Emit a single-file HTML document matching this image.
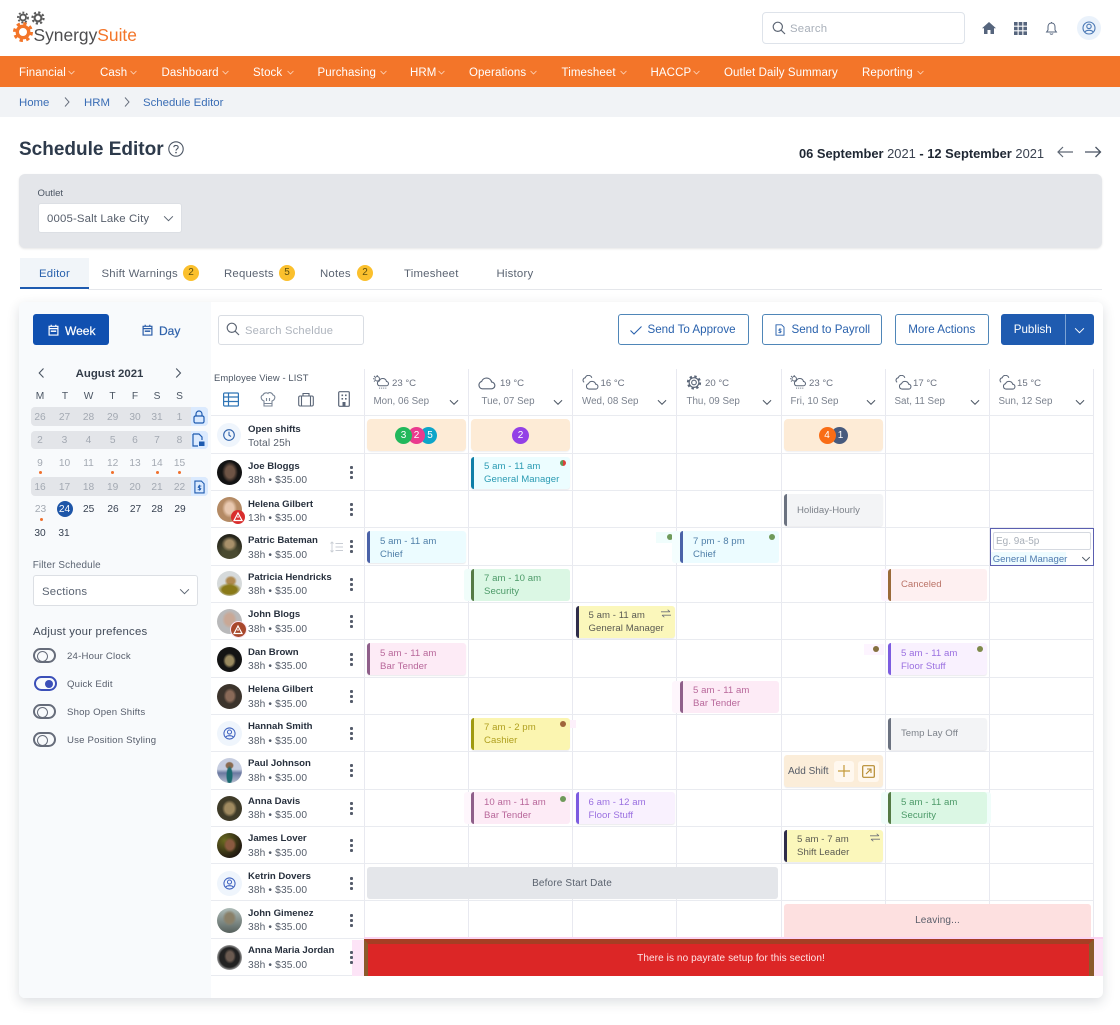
<!DOCTYPE html>
<html lang="en"><head><meta charset="utf-8"><title>Schedule Editor</title>
<style>
*{box-sizing:border-box}
html,body{margin:0;padding:0;background:#fff}
body{width:1120px;height:1025px;position:relative;overflow:hidden;font-family:"Liberation Sans",sans-serif;color:#374151;filter:blur(.3px)}
.a{position:absolute}
.t{position:absolute;white-space:nowrap;line-height:14px;transform:translateY(calc(-50% + .8px))}
.m{position:absolute;white-space:nowrap;line-height:14px;transform:translate(-50%,calc(-50% + .8px))}
svg{position:absolute;overflow:visible;fill:none}
.nav{color:#fff;font-size:11.5px;letter-spacing:.1px;top:71.5px}
.navc{top:69.5px;stroke:#fde3d0;stroke-width:1}
.tab{font-size:11.4px;color:#5b6472;top:273px;letter-spacing:.2px}
.bd{position:absolute;width:16px;height:16px;border-radius:50%;background:#fbc02d;top:265px;font-size:10px;line-height:16px;text-align:center;color:#5f500e}
.btn{position:absolute;top:314px;height:31px;border:1px solid #4f86b8;border-radius:3px;background:#fff;color:#2a62ad;font-size:11.6px;line-height:30px;white-space:nowrap}
.cal{font-size:10.2px;color:#a3a9b2}
.cd{font-size:10.2px;color:#374151}
.bar{position:absolute;left:31px;width:177px;height:18.7px;background:#e3e5e9;border-radius:4px}
.bl{position:absolute;left:191px;width:17px;height:18.7px;background:#dbeafe;border-radius:0 4px 4px 0}
.dot{position:absolute;width:3px;height:3px;border-radius:50%;background:#f0702c}
.tg{position:absolute;left:33px;width:23px;height:15px;border:2px solid #666c7a;border-radius:8px}
.tg:after{content:"";position:absolute;left:2px;top:1px;width:9px;height:9px;border:1.6px solid #666c7a;border-radius:50%}
.tl{font-size:9.6px;color:#565d6b;left:67px;letter-spacing:.2px}
.vl{position:absolute;top:369px;height:569px;width:1px;background:#e8e9f0}
.hl{position:absolute;left:211px;width:883px;height:1px;background:#e9ebf0}
.wt{font-size:9.6px;color:#6b7280;top:382.7px}
.wd{font-size:9.8px;color:#7b828e;top:400.5px}
.n{font-size:9.6px;font-weight:bold;color:#27303d;left:248px}
.s{font-size:10.2px;color:#565e6b;left:248px;letter-spacing:.15px}
.av{position:absolute;left:217px;width:25px;height:25px;border-radius:50%}
.k{position:absolute;left:350px;width:3px;height:13px;background:radial-gradient(circle at 1.5px 1.5px,#555c6b 1.5px,transparent 1.7px) 0 0/3px 5px repeat-y}
.c{position:absolute;width:99px;height:32px;border-radius:3px;border-left:3px solid;padding:3.5px 0 0 10px;font-size:9.6px;line-height:13px;white-space:nowrap;box-shadow:0 1px 1px rgba(60,60,80,.1)}
.c span{display:block;letter-spacing:.05px}
.gm{background:#ecfdff;border-color:#0e7fa8;color:#2b9bb3}
.ch{background:#ecfcff;border-color:#4a62a8;color:#4f7fa8}
.gr{background:#dbf7e4;border-color:#557a45;color:#4c9a68}
.ye{background:#fbf7bb;border-color:#2f2d4a;color:#5a5a52}
.ca{background:#fbf5b0;border-color:#a09a10;color:#b0a020}
.pk{background:#fdebf6;border-color:#8f5f8a;color:#b8679a}
.pu{background:#f9f1fe;border-color:#7c5ce0;color:#9a6fe0}
.gy{background:#f3f4f6;border-color:#6b7280;color:#7d828a;line-height:26px}
.cn{background:#fef0f1;border-color:#9a6a3a;color:#bb7468;line-height:26px}
.o{position:absolute;height:32px;width:99px;background:#fdebd6;border-radius:4px;box-shadow:0 1px 1px rgba(60,60,80,.08)}
.r{position:absolute;width:17px;height:17px;border-radius:50%;color:#fff;font-size:10px;line-height:17px;text-align:center;top:427px}
.d{position:absolute;width:6px;height:6px;border-radius:50%}
</style></head><body>
<svg width="0" height="0" style="position:absolute"><defs>
<symbol id="chev" viewBox="0 0 12 8"><path d="M1 1.5 6 6.5 11 1.5" stroke="currentColor" stroke-width="1.2" fill="none"/></symbol>
<symbol id="cl" viewBox="0 0 18 16"><path d="M5 14H13.5a3.2 3.2 0 0 0 .4-6.4A5 5 0 0 0 4.4 7 3.6 3.6 0 0 0 5 14Z" stroke="#5a6577" stroke-width="1.1" fill="none"/></symbol>
<symbol id="cls" viewBox="0 0 18 16"><path d="M2.2 7.8A2.7 2.7 0 0 1 3.4 2.9 3.7 3.7 0 0 1 10.4 3M7.4 15H14.2a2.6 2.6 0 0 0 .3-5.2 4 4 0 0 0-7.6-.5A2.9 2.9 0 0 0 7.4 15Z" stroke="#5a6577" stroke-width="1.1" fill="none"/></symbol>
<symbol id="rain" viewBox="0 0 18 16"><circle cx="4.4" cy="4" r="2.4" stroke="#5a6577" fill="none"/><path d="M1 1 2 2M4.4 0V1M1 4H0M1 7 2 6" stroke="#5a6577"/><path d="M7 11.5H14a2.3 2.3 0 0 0 .3-4.6A4 4 0 0 0 6.6 6.4 2.6 2.6 0 0 0 7 11.5Z" stroke="#5a6577" stroke-width="1.1" fill="#fff"/><path d="M6.5 14h8" stroke="#5a6577" stroke-dasharray="1 1.2"/></symbol>
<symbol id="gear" viewBox="0 0 16 16"><circle cx="8" cy="8" r="2.5" stroke="#5a6577" stroke-width="1.2" fill="none"/><circle cx="8" cy="8" r="5.2" stroke="#5a6577" stroke-width="1.2" fill="none"/><circle cx="8" cy="8" r="6.6" stroke="#5a6577" stroke-width="2" stroke-dasharray="2.6 2.6" fill="none"/></symbol>
<symbol id="sw" viewBox="0 0 12 10"><path d="M0 3H10.5M8 .5 10.8 3M12 7H1.5M4 9.5 1.2 7" stroke="#6d7078" stroke-width="1" fill="none"/></symbol>
<symbol id="tri" viewBox="0 0 14 14"><path d="M7 3 11 10.5H3Z" stroke="#fff" stroke-width="1.2" fill="none"/><path d="M7 6V8" stroke="#fff"/></symbol>
<symbol id="user" viewBox="0 0 14 14"><circle cx="7" cy="7" r="6" stroke="currentColor" stroke-width="1.1" fill="none"/><circle cx="7" cy="5.4" r="2.2" stroke="currentColor" stroke-width="1.1" fill="none"/><path d="M3 11c1-2.2 7-2.2 8 0" stroke="currentColor" stroke-width="1.1" fill="none"/></symbol>
<symbol id="cal" viewBox="0 0 12 13"><path d="M1.2 2.5H10.8V12H1.2ZM1.2 5H10.8M3.5 .8V3M8.5 .8V3" stroke="currentColor" stroke-width="1.3" fill="none"/><path d="M3 7.8H9" stroke="currentColor" stroke-width="1.6"/></symbol>
<symbol id="doc" viewBox="0 0 12 15"><path d="M1 1H8L11 4V14H1Z" stroke="currentColor" stroke-width="1.2" fill="none"/><path d="M6 5V11.5M8 6.5H5L4.5 8 7.5 9 7 10.5H4" stroke="currentColor" stroke-width=".9" fill="none"/></symbol>
</defs></svg>

<!-- logo -->
<svg style="left:13px;top:22px" width="20" height="20" viewBox="0 0 20 20"><circle cx="10" cy="10" r="5.7" stroke="#f37529" stroke-width="3.4"/><circle cx="10" cy="10" r="8.4" stroke="#f37529" stroke-width="3.2" stroke-dasharray="3.3 3.3"/></svg>
<svg style="left:17px;top:12px" width="12" height="11" viewBox="0 0 12 11"><circle cx="6" cy="5.5" r="3" stroke="#5a5a5a" stroke-width="1.9"/><circle cx="6" cy="5.5" r="5" stroke="#5a5a5a" stroke-width="1.8" stroke-dasharray="1.9 1.9"/></svg>
<svg style="left:31px;top:12px" width="16" height="12" viewBox="0 0 16 12"><circle cx="7" cy="6" r="3.4" stroke="#5a5a5a" stroke-width="2.1"/><circle cx="7" cy="6" r="5.6" stroke="#5a5a5a" stroke-width="2.1" stroke-dasharray="2.2 2.2"/></svg>
<div class="t" style="left:33.5px;top:33.5px;font-size:17.4px;line-height:20px;color:#4d4d4f">Synergy<span style="color:#f37529">Suite</span></div>

<!-- top right -->
<div class="a" style="left:762px;top:12px;width:203px;height:31.5px;border:1.5px solid #dee3ea;border-radius:4px;background:#fff"></div>
<svg style="left:772px;top:21px" width="14" height="14" viewBox="0 0 14 14"><circle cx="5.8" cy="5.8" r="4.6" stroke="#5d6674" stroke-width="1.2"/><path d="M9.2 9.2 13 13" stroke="#5d6674" stroke-width="1.2"/></svg>
<div class="t" style="left:790px;top:28px;font-size:11.4px;color:#a8afb9;letter-spacing:.2px">Search</div>
<svg style="left:982px;top:22px" width="14" height="12" viewBox="0 0 14 12"><path d="M7 0 14 6.2H12V12H8.5V8H5.5V12H2V6.2H0Z" fill="#56657d"/></svg>
<svg style="left:1014px;top:22px" width="13" height="13" viewBox="0 0 13 13" fill="#56657d"><path fill="#56657d" d="M0 0h3.6v3.6H0zM4.7 0h3.6v3.6H4.7zM9.4 0H13v3.6H9.4zM0 4.7h3.6v3.6H0zM4.7 4.7h3.6v3.6H4.7zM9.4 4.7H13v3.6H9.4zM0 9.4h3.6V13H0zM4.7 9.4h3.6V13H4.7zM9.4 9.4H13V13H9.4z"/></svg>
<svg style="left:1046px;top:22px" width="11" height="13" viewBox="0 0 11 13"><path d="M5.5 1C3 1 2 3 2 5V8L.6 10H10.4L9 8V5C9 3 8 1 5.5 1ZM4 11.4C4.5 12.6 6.5 12.6 7 11.4M5.5 0V1" stroke="#56657d" stroke-width="1"/></svg>
<div class="a" style="left:1077px;top:16px;width:24px;height:24px;border-radius:50%;background:#eaf2fb"></div>
<svg style="left:1082px;top:21px;color:#4a78b5" width="14" height="14"><use href="#user"/></svg>

<!-- nav -->
<div class="a" style="left:0;top:56px;width:1120px;height:31px;background:#f37529"></div>
<div class="t nav" style="left:19px">Financial</div><svg class="navc" style="left:67.5px;color:#fde3d0" width="7" height="5"><use href="#chev"/></svg>
<div class="t nav" style="left:100px">Cash</div><svg class="navc" style="left:129.5px;color:#fde3d0" width="7" height="5"><use href="#chev"/></svg>
<div class="t nav" style="left:161.5px">Dashboard</div><svg class="navc" style="left:221.5px;color:#fde3d0" width="7" height="5"><use href="#chev"/></svg>
<div class="t nav" style="left:253px">Stock</div><svg class="navc" style="left:286.5px;color:#fde3d0" width="7" height="5"><use href="#chev"/></svg>
<div class="t nav" style="left:317.5px">Purchasing</div><svg class="navc" style="left:379.5px;color:#fde3d0" width="7" height="5"><use href="#chev"/></svg>
<div class="t nav" style="left:410px">HRM</div><svg class="navc" style="left:438px;color:#fde3d0" width="7" height="5"><use href="#chev"/></svg>
<div class="t nav" style="left:469px">Operations</div><svg class="navc" style="left:530px;color:#fde3d0" width="7" height="5"><use href="#chev"/></svg>
<div class="t nav" style="left:561.5px">Timesheet</div><svg class="navc" style="left:619.5px;color:#fde3d0" width="7" height="5"><use href="#chev"/></svg>
<div class="t nav" style="left:650.5px">HACCP</div><svg class="navc" style="left:692.5px;color:#fde3d0" width="7" height="5"><use href="#chev"/></svg>
<div class="t nav" style="left:724px">Outlet Daily Summary</div>
<div class="t nav" style="left:862px">Reporting</div><svg class="navc" style="left:916.5px;color:#fde3d0" width="7" height="5"><use href="#chev"/></svg>

<!-- breadcrumb -->
<div class="a" style="left:0;top:87px;width:1120px;height:30px;background:#f1f3f6"></div>
<div class="t" style="left:19px;top:102px;font-size:11.4px;color:#3a6db5">Home</div>
<svg style="left:64px;top:97px" width="6" height="10"><path d="M1 .5 5 5 1 9.5" stroke="#6b7280"/></svg>
<div class="t" style="left:84px;top:102px;font-size:11.4px;color:#3a6db5">HRM</div>
<svg style="left:124px;top:97px" width="6" height="10"><path d="M1 .5 5 5 1 9.5" stroke="#6b7280"/></svg>
<div class="t" style="left:143px;top:102px;font-size:11.4px;color:#3a6db5">Schedule Editor</div>

<!-- title -->
<div class="t" style="left:19px;top:149px;font-size:19px;line-height:22px;font-weight:bold;color:#2d3a4b">Schedule Editor</div>
<svg style="left:168px;top:141px" width="16" height="16" viewBox="0 0 16 16"><circle cx="8" cy="8" r="7.2" stroke="#4b5563" stroke-width="1.1"/><path d="M5.8 6.2C6 3.9 10.2 3.9 10.2 6.3 10.2 7.9 8 7.9 8 9.6" stroke="#4b5563" stroke-width="1.1"/><circle cx="8" cy="11.6" r=".8" fill="#4b5563"/></svg>
<div class="t" style="left:799px;top:152.5px;font-size:12.9px;color:#3a4250"><b style="color:#1f2733">06 September</b> 2021 <b style="color:#1f2733">- 12 September</b> 2021</div>
<svg style="left:1057px;top:146px" width="17" height="12"><path d="M16 6H1M6 1 1 6 6 11" stroke="#5f6875" stroke-width="1.2"/></svg>
<svg style="left:1085px;top:146px" width="17" height="12"><path d="M0 6H15.5M10.5 1 15.5 6 10.5 11" stroke="#4b5563" stroke-width="1.3"/></svg>

<!-- outlet panel -->
<div class="a" style="left:19px;top:173.5px;width:1083px;height:74px;background:#e4e6ea;border-radius:6px;box-shadow:0 1px 2px rgba(0,0,0,.1)"></div>
<div class="t" style="left:37.5px;top:192.5px;font-size:9.6px;color:#4b5563">Outlet</div>
<div class="a" style="left:37.5px;top:203px;width:144px;height:30px;background:#fff;border:1px solid #dcdfe4;border-radius:3px"></div>
<div class="t" style="left:47px;top:217.5px;font-size:11.4px;color:#565e6b;letter-spacing:.15px">0005-Salt Lake City</div>
<svg style="left:163px;top:215px;color:#5b6472" width="11" height="7"><use href="#chev"/></svg>

<!-- tabs -->
<div class="a" style="left:20px;top:258px;width:68.5px;height:31px;background:#f1f5f9;border-bottom:2px solid #1e5bb0"></div>
<div class="a" style="left:88px;top:289px;width:1014px;height:1px;background:#e5e7eb"></div>
<div class="t tab" style="left:39px;color:#2a62ad">Editor</div>
<div class="t tab" style="left:101.5px">Shift Warnings</div><div class="bd" style="left:183px">2</div>
<div class="t tab" style="left:224px">Requests</div><div class="bd" style="left:279px">5</div>
<div class="t tab" style="left:320px">Notes</div><div class="bd" style="left:357px">2</div>
<div class="t tab" style="left:404px">Timesheet</div>
<div class="t tab" style="left:496.5px">History</div>

<!-- main card -->
<div class="a" style="left:19px;top:302px;width:1084px;height:696px;background:#fff;border-radius:6px;box-shadow:0 4px 12px rgba(40,50,70,.16)"></div>
<div class="a" style="left:19px;top:302px;width:192px;height:696px;background:#f8fafc;border-radius:6px 0 0 6px"></div>

<!-- week/day -->
<div class="a" style="left:32.6px;top:314px;width:76px;height:31px;background:#1050b0;border-radius:3px"></div>
<svg style="left:47.5px;top:324px;color:#fff" width="11" height="12"><use href="#cal"/></svg>
<div class="t" style="left:65px;top:330px;font-size:12px;color:#fff;-webkit-text-stroke:.2px #fff">Week</div>
<svg style="left:141.5px;top:324px;color:#2a5ca8" width="11" height="12"><use href="#cal"/></svg>
<div class="t" style="left:159px;top:330px;font-size:12px;color:#2f62ab;-webkit-text-stroke:.2px #2f62ab">Day</div>

<!-- calendar -->
<svg style="left:38px;top:368px" width="7" height="10"><path d="M5.5 .5 1.2 5 5.5 9.5" stroke="#4b5563" stroke-width="1.1"/></svg>
<svg style="left:175px;top:368px" width="7" height="10"><path d="M1.2 .5 5.5 5 1.2 9.5" stroke="#4b5563" stroke-width="1.1"/></svg>
<div class="m" style="left:109.5px;top:373px;font-size:11.4px;font-weight:bold;color:#333c49">August 2021</div>
<div class="m cd" style="left:40px;top:395.7px;color:#4b5563">M</div><div class="m cd" style="left:65px;top:395.7px;color:#4b5563">T</div><div class="m cd" style="left:88.5px;top:395.7px;color:#4b5563">W</div><div class="m cd" style="left:112.5px;top:395.7px;color:#4b5563">T</div><div class="m cd" style="left:135px;top:395.7px;color:#4b5563">F</div><div class="m cd" style="left:157px;top:395.7px;color:#4b5563">S</div><div class="m cd" style="left:179.5px;top:395.7px;color:#4b5563">S</div>

<div class="bar" style="top:407.3px"></div><div class="bl" style="top:407.3px"></div>
<div class="bar" style="top:430.7px"></div><div class="bl" style="top:430.7px"></div>
<div class="bar" style="top:477.3px"></div><div class="bl" style="top:477.3px"></div>
<svg style="left:193px;top:410px" width="12" height="14" viewBox="0 0 12 14"><rect x="1" y="6" width="10" height="7" rx="1.5" stroke="#1e5bb0" stroke-width="1.2"/><path d="M3 6V4a3 3 0 0 1 6 0V6" stroke="#1e5bb0" stroke-width="1.2"/></svg>
<svg style="left:192px;top:433px;color:#1e5bb0" width="13" height="14" viewBox="0 0 13 14"><path d="M1 1H7L10 4V7M6 13H1V1" stroke="#1e5bb0" stroke-width="1.2"/><rect x="7" y="8.5" width="5.5" height="4.5" fill="#1e5bb0"/></svg>
<svg style="left:194px;top:479.5px;color:#1e5bb0" width="11" height="14"><use href="#doc"/></svg>

<div class="m cal" style="left:40px;top:416.7px">26</div><div class="m cal" style="left:64.5px;top:416.7px">27</div><div class="m cal" style="left:88.5px;top:416.7px">28</div><div class="m cal" style="left:112.7px;top:416.7px">29</div><div class="m cal" style="left:135px;top:416.7px">30</div><div class="m cal" style="left:157px;top:416.7px">31</div><div class="m cal" style="left:179.5px;top:416.7px">1</div>
<div class="m cal" style="left:40px;top:439.7px">2</div><div class="m cal" style="left:64.5px;top:439.7px">3</div><div class="m cal" style="left:88.5px;top:439.7px">4</div><div class="m cal" style="left:112.7px;top:439.7px">5</div><div class="m cal" style="left:135px;top:439.7px">6</div><div class="m cal" style="left:157px;top:439.7px">7</div><div class="m cal" style="left:179.5px;top:439.7px">8</div>
<div class="m cal" style="left:40px;top:462.7px">9</div><div class="m cal" style="left:64.5px;top:462.7px">10</div><div class="m cal" style="left:88.5px;top:462.7px">11</div><div class="m cal" style="left:112.7px;top:462.7px">12</div><div class="m cal" style="left:135px;top:462.7px">13</div><div class="m cal" style="left:157px;top:462.7px">14</div><div class="m cal" style="left:179.5px;top:462.7px">15</div>
<div class="dot" style="left:38.7px;top:471px"></div><div class="dot" style="left:111.3px;top:471px"></div><div class="dot" style="left:155.6px;top:471px"></div><div class="dot" style="left:178px;top:471px"></div>
<div class="m cal" style="left:40px;top:486.7px">16</div><div class="m cal" style="left:64.5px;top:486.7px">17</div><div class="m cal" style="left:88.5px;top:486.7px">18</div><div class="m cal" style="left:112.7px;top:486.7px">19</div><div class="m cal" style="left:135px;top:486.7px">20</div><div class="m cal" style="left:157px;top:486.7px">21</div><div class="m cal" style="left:179.5px;top:486.7px">22</div>
<div class="m cal" style="left:40.5px;top:509.3px">23</div><div class="dot" style="left:39.5px;top:517.5px"></div>
<div class="a" style="left:56.5px;top:501px;width:16px;height:16px;border-radius:50%;background:#1e56a8"></div>
<div class="m" style="left:64.5px;top:509.3px;font-size:10.2px;color:#fff">24</div>
<div class="m cd" style="left:88.7px;top:509.3px">25</div><div class="m cd" style="left:113px;top:509.3px">26</div><div class="m cd" style="left:135.5px;top:509.3px">27</div><div class="m cd" style="left:157px;top:509.3px">28</div><div class="m cd" style="left:180px;top:509.3px">29</div>
<div class="m cd" style="left:40px;top:533px">30</div><div class="m cd" style="left:64px;top:533px">31</div>

<!-- filter -->
<div class="t" style="left:32.7px;top:565px;font-size:9.9px;color:#5b6472;letter-spacing:.15px">Filter Schedule</div>
<div class="a" style="left:32.7px;top:575px;width:165.5px;height:30.5px;background:#fff;border:1px solid #dcdfe4;border-radius:3px"></div>
<div class="t" style="left:42px;top:590.5px;font-size:11.4px;color:#5b6472;letter-spacing:.2px">Sections</div>
<svg style="left:179px;top:587.5px;color:#5b6472" width="11" height="7"><use href="#chev"/></svg>
<div class="t" style="left:33px;top:631px;font-size:11.4px;color:#424b59;letter-spacing:.2px">Adjust your prefences</div>
<div class="tg" style="top:648px"></div><div class="t tl" style="top:656px">24-Hour Clock</div>
<div class="a" style="left:33.5px;top:676px;width:23px;height:15px;border:2px solid #3b4fb8;border-radius:8px"></div><div class="a" style="left:45px;top:679.5px;width:8px;height:8px;border-radius:50%;background:#3b4fb8"></div><div class="t tl" style="top:684px">Quick Edit</div>
<div class="tg" style="top:704px"></div><div class="t tl" style="top:712px">Shop Open Shifts</div>
<div class="tg" style="top:732px"></div><div class="t tl" style="top:740px">Use Position Styling</div>

<!-- search schedule -->
<div class="a" style="left:217.5px;top:314.5px;width:146px;height:30.5px;background:#fff;border:1px solid #d9dde3;border-radius:3px"></div>
<svg style="left:226px;top:322px" width="14" height="14" viewBox="0 0 14 14"><circle cx="5.8" cy="5.8" r="4.6" stroke="#5d6674" stroke-width="1.2"/><path d="M9.2 9.2 13 13" stroke="#5d6674" stroke-width="1.2"/></svg>
<div class="t" style="left:245px;top:330px;font-size:11.2px;color:#aeb4bd;letter-spacing:.2px">Search Scheldue</div>

<!-- buttons -->
<div class="btn" style="left:617.5px;width:131.5px;padding-left:29px">Send To Approve</div>
<svg style="left:630px;top:326px" width="12" height="9"><path d="M.5 4.5 4 8 11.5 .5" stroke="#2a62ad" stroke-width="1.1"/></svg>
<div class="btn" style="left:761.5px;width:120.5px;padding-left:29px">Send to Payroll</div>
<svg style="left:775px;top:323.5px;color:#2a62ad" width="10" height="12"><use href="#doc"/></svg>
<div class="btn" style="left:894.5px;width:94.5px;text-align:center">More Actions</div>
<div class="btn" style="left:1001px;width:63.5px;background:#1f5bb0;border-color:#1f5bb0;border-radius:3px 0 0 3px;color:#fff;text-align:center">Publish</div>
<div class="btn" style="left:1064.5px;width:29.5px;background:#1f5bb0;border-color:#1f5bb0;border-left:1px solid #7da3d4;border-radius:0 3px 3px 0"></div>
<svg style="left:1073.5px;top:327px;color:#fff" width="11" height="7"><use href="#chev"/></svg>

<!-- grid -->
<div class="vl" style="left:364px"></div><div class="vl" style="left:468px"></div><div class="vl" style="left:572px"></div><div class="vl" style="left:676px"></div><div class="vl" style="left:781px"></div><div class="vl" style="left:885px"></div><div class="vl" style="left:989px"></div><div class="vl" style="left:1093px"></div>
<div class="hl" style="top:415px"></div><div class="hl" style="top:453px"></div><div class="hl" style="top:490px"></div><div class="hl" style="top:527px"></div><div class="hl" style="top:565px"></div><div class="hl" style="top:602px"></div><div class="hl" style="top:639px"></div><div class="hl" style="top:677px"></div><div class="hl" style="top:714px"></div><div class="hl" style="top:751px"></div><div class="hl" style="top:789px"></div><div class="hl" style="top:826px"></div><div class="hl" style="top:863px"></div><div class="hl" style="top:900px"></div><div class="hl" style="top:938px"></div>
<div class="a" style="left:211px;top:975px;width:141px;height:1px;background:#e9ebf0"></div>

<!-- employee view header -->
<div class="t" style="left:214px;top:377px;font-size:9.4px;color:#4b5563;letter-spacing:.1px">Employee View - LIST</div>
<svg style="left:223px;top:391.5px" width="16" height="15" viewBox="0 0 16 15"><rect x=".6" y="1" width="14.8" height="13" rx="1" stroke="#2f74b5" stroke-width="1.2"/><path d="M.6 5H15.4M.6 9.5H15.4M5.5 1V14" stroke="#2f74b5" stroke-width="1.2"/></svg>
<svg style="left:260px;top:391.5px" width="16" height="15" viewBox="0 0 16 15"><path d="M4 9C1 8 0 4 3 3 4 .5 7 .5 8 1.5 9-.2 12 .5 13 3 16 4 15 8 12 9V14H4ZM4 11.5H12M6.5 6V9M9.5 6V9" stroke="#7a8696" stroke-width="1.1"/></svg>
<svg style="left:298px;top:391.5px" width="16" height="15" viewBox="0 0 16 15"><rect x=".7" y="4" width="14.6" height="10" rx="1.5" stroke="#5a6577" stroke-width="1.1"/><path d="M5 4V1.5H11V4M3.5 4V14M12.5 4V14" stroke="#5a6577" stroke-width="1.1"/></svg>
<svg style="left:338px;top:391px" width="12" height="16" viewBox="0 0 12 16"><rect x=".7" y=".7" width="10.6" height="14.6" rx="1" stroke="#5a6577" stroke-width="1.2"/><path d="M3.5 3.5h1.6v1.6H3.500zM7 3.500h1.600v1.600H7zM3.500 7h1.600v1.600H3.500zM7 7h1.600v1.600H7zM4.500 11h3v4.300h-3z" fill="#5a6577"/></svg>

<!-- day headers -->
<svg style="left:373px;top:375px" width="17" height="15"><use href="#rain"/></svg><div class="t wt" style="left:392px">23 °C</div><div class="t wd" style="left:373.5px">Mon, 06 Sep</div>
<svg style="left:477px;top:374px" width="19" height="17"><use href="#cl"/></svg><div class="t wt" style="left:500px">19 °C</div><div class="t wd" style="left:481.500px">Tue, 07 Sep</div>
<svg style="left:581.5px;top:375px" width="17" height="15"><use href="#cls"/></svg><div class="t wt" style="left:600.500px">16 °C</div><div class="t wd" style="left:582px">Wed, 08 Sep</div>
<svg style="left:686px;top:375px" width="16" height="15"><use href="#gear"/></svg><div class="t wt" style="left:705px">20 °C</div><div class="t wd" style="left:686.500px">Thu, 09 Sep</div>
<svg style="left:790px;top:375px" width="17" height="15"><use href="#rain"/></svg><div class="t wt" style="left:809px">23 °C</div><div class="t wd" style="left:790.500px">Fri, 10 Sep</div>
<svg style="left:894.500px;top:375px" width="17" height="15"><use href="#cls"/></svg><div class="t wt" style="left:913px">17 °C</div><div class="t wd" style="left:894.500px">Sat, 11 Sep</div>
<svg style="left:998.500px;top:375px" width="17" height="15"><use href="#cls"/></svg><div class="t wt" style="left:1017px">15 °C</div><div class="t wd" style="left:998.500px">Sun, 12 Sep</div>
<svg style="left:449px;top:398.500px;color:#4b5563" width="10" height="6.500"><use href="#chev"/></svg><svg style="left:553px;top:398.500px;color:#4b5563" width="10" height="6.500"><use href="#chev"/></svg><svg style="left:657px;top:398.500px;color:#4b5563" width="10" height="6.500"><use href="#chev"/></svg><svg style="left:762px;top:398.500px;color:#4b5563" width="10" height="6.500"><use href="#chev"/></svg><svg style="left:866px;top:398.500px;color:#4b5563" width="10" height="6.500"><use href="#chev"/></svg><svg style="left:970px;top:398.500px;color:#4b5563" width="10" height="6.500"><use href="#chev"/></svg><svg style="left:1075px;top:398.500px;color:#4b5563" width="10" height="6.500"><use href="#chev"/></svg>

<!-- open shifts row -->
<div class="a" style="left:217px;top:423px;width:24px;height:24px;border-radius:50%;background:#eff5fc"></div>
<svg style="left:223px;top:429px" width="12" height="12" viewBox="0 0 12 12"><circle cx="6" cy="6" r="5.300" stroke="#2f62ab" stroke-width="1.100"/><path d="M6 2.800V6.200L8 7.500" stroke="#2f62ab" stroke-width="1.100"/></svg>
<div class="t n" style="top:428.500px">Open shifts</div><div class="t s" style="top:443px">Total 25h</div>

<!-- employees -->
<div class="av" style="top:459.500px;background:radial-gradient(ellipse 32% 42% at 52% 48%,#6e5445 55%,transparent 100%),#131313"></div>
<div class="t n" style="top:465.700px">Joe Bloggs</div><div class="t s" style="top:480.300px">38h • $35.00</div><div class="k" style="top:465.500px"></div>

<div class="av" style="top:496.500px;background:radial-gradient(ellipse 30% 38% at 50% 45%,#e8c8b0 55%,transparent 100%),#b48a64"></div>
<div class="a" style="left:231px;top:510px;width:14px;height:14px;border-radius:50%;background:#d92d2d"></div><svg style="left:231px;top:510px" width="14" height="14"><use href="#tri"/></svg>
<div class="t n" style="top:503.500px">Helena Gilbert</div><div class="t s" style="top:518.300px">13h • $35.00</div><div class="k" style="top:502.500px"></div>

<div class="av" style="top:533.500px;background:radial-gradient(ellipse 32% 30% at 50% 40%,#a8906a 50%,transparent 100%),radial-gradient(circle at 50% 80%,#4a4a30 30%,#23221a 80%)"></div>
<div class="t n" style="top:540.300px">Patric Bateman</div><div class="t s" style="top:555px">38h • $35.00</div><div class="k" style="top:540px"></div>
<svg style="left:330px;top:542px" width="13" height="10" viewBox="0 0 13 10"><path d="M2 0V10M.5 1.500 2 0 3.500 1.500M.5 8.500 2 10 3.500 8.500M5.500 1.500H13M5.500 5H13M5.500 8.500H13" stroke="#c9cdd4" stroke-width=".9"/></svg>

<div class="av" style="top:571px;background:radial-gradient(ellipse 48% 28% at 50% 75%,#8a7a18 60%,transparent 100%),radial-gradient(ellipse 25% 22% at 55% 40%,#b08a50 60%,transparent 100%),#d6dadb"></div>
<div class="t n" style="top:576.700px">Patricia Hendricks</div><div class="t s" style="top:591.300px">38h • $35.00</div><div class="k" style="top:577.500px"></div>

<div class="av" style="top:609px;background:radial-gradient(ellipse 30% 36% at 50% 42%,#c9a896 60%,transparent 100%),#b9b9ba"></div>
<div class="a" style="left:230.500px;top:622px;width:15px;height:15px;border-radius:50%;background:#a8482c;box-shadow:0 0 0 1px #fbe2f0"></div><svg style="left:231px;top:622.500px" width="14" height="14"><use href="#tri"/></svg>
<div class="t n" style="top:614px">John Blogs</div><div class="t s" style="top:628.700px">38h • $35.00</div><div class="k" style="top:615px"></div>

<div class="av" style="top:646.500px;background:radial-gradient(ellipse 26% 30% at 50% 55%,#9a8a60 60%,transparent 100%),#141414"></div>
<div class="t n" style="top:651.500px">Dan Brown</div><div class="t s" style="top:666px">38h • $35.00</div><div class="k" style="top:652.500px"></div>

<div class="av" style="top:683.500px;background:radial-gradient(ellipse 26% 32% at 52% 48%,#8a6a58 60%,transparent 100%),#3c342c"></div>
<div class="t n" style="top:689px">Helena Gilbert</div><div class="t s" style="top:703.500px">38h • $35.00</div><div class="k" style="top:689.500px"></div>

<div class="a" style="left:217px;top:721px;width:25px;height:25px;border-radius:50%;background:#eff5fc"></div><svg style="left:223px;top:727px;color:#3f62c0" width="13" height="13"><use href="#user"/></svg>
<div class="t n" style="top:726px">Hannah Smith</div><div class="t s" style="top:740.700px">38h • $35.00</div><div class="k" style="top:727px"></div>

<div class="av" style="top:758px;background:radial-gradient(ellipse 14% 40% at 50% 70%,#1c6a70 70%,transparent 100%),radial-gradient(ellipse 18% 16% at 50% 30%,#8a6a50 70%,transparent 100%),linear-gradient(#c6cde0 45%,#6a78a0 60%,#b8bfd0)"></div>
<div class="t n" style="top:763.300px">Paul Johnson</div><div class="t s" style="top:778px">38h • $35.00</div><div class="k" style="top:764px"></div>

<div class="av" style="top:795.500px;background:radial-gradient(ellipse 30% 34% at 50% 50%,#a08a60 60%,transparent 100%),#3f3b28"></div>
<div class="t n" style="top:800.500px">Anna Davis</div><div class="t s" style="top:815.300px">38h • $35.00</div><div class="k" style="top:801.500px"></div>

<div class="av" style="top:833px;background:radial-gradient(ellipse 26% 30% at 52% 48%,#8a5a40 60%,transparent 100%),radial-gradient(circle at 30% 30%,#6a6a20,#201810 75%)"></div>
<div class="t n" style="top:838px">James Lover</div><div class="t s" style="top:852.700px">38h • $35.00</div><div class="k" style="top:839px"></div>

<div class="a" style="left:217px;top:870.500px;width:25px;height:25px;border-radius:50%;background:#eff5fc"></div><svg style="left:223px;top:876.500px;color:#3f62c0" width="13" height="13"><use href="#user"/></svg>
<div class="t n" style="top:875.500px">Ketrin Dovers</div><div class="t s" style="top:890px">38h • $35.00</div><div class="k" style="top:876.500px"></div>

<div class="av" style="top:907.500px;background:radial-gradient(ellipse 28% 32% at 50% 40%,#8a8068 60%,transparent 100%),linear-gradient(#aebcb8,#56605c)"></div>
<div class="t n" style="top:912.700px">John Gimenez</div><div class="t s" style="top:927.300px">38h • $35.00</div><div class="k" style="top:913.500px"></div>

<div class="av" style="top:945px;background:radial-gradient(ellipse 24% 30% at 52% 45%,#6a5a50 60%,transparent 100%),radial-gradient(circle at 50% 50%,#222 55%,#c4c4c4 75%)"></div>
<div class="t n" style="top:950px">Anna Maria Jordan</div><div class="t s" style="top:964.700px">38h • $35.00</div>

<!-- open shift cards -->
<div class="o" style="left:366.500px;top:419px"></div><div class="o" style="left:470.700px;top:419px"></div><div class="o" style="left:783.500px;top:419px"></div>
<div class="r" style="left:420px;background:#0ea5c9;padding-left:3px">5</div>
<div class="r" style="left:408px;background:#ea3a8e">2</div>
<div class="r" style="left:395px;background:#22b85c">3</div>
<div class="r" style="left:512px;background:#9340e6">2</div>
<div class="r" style="left:831px;background:#475a7d;padding-left:2px">1</div>
<div class="r" style="left:818.500px;background:#f96d16">4</div>

<!-- shifts -->
<div class="c gm" style="left:471px;top:456.500px"><span>5 am - 11 am</span><span>General Manager</span></div>
<div class="d" style="left:560px;top:459.700px;background:linear-gradient(90deg,#5c9a5a 50%,#d9423a 50%)"></div>

<div class="c gy" style="left:784px;top:494px">Holiday-Hourly</div>

<div class="c ch" style="left:367px;top:531px"><span>5 am - 11 am</span><span>Chief</span></div>
<div class="a" style="left:656px;top:532px;width:20px;height:11px;background:#f0fdfc"></div>
<div class="d" style="left:666.700px;top:534.300px;background:#6f9a5a"></div>
<div class="c ch" style="left:680px;top:531px;box-shadow:-8px 0 0 #f4fefe"><span>7 pm - 8 pm</span><span>Chief</span></div>
<div class="d" style="left:768.500px;top:534.300px;background:#6f9a5a"></div>

<div class="a" style="left:989.500px;top:528px;width:104.500px;height:38px;border:1px solid #5b5fb0;background:#fff"></div>
<div class="a" style="left:993px;top:531.700px;width:98px;height:18px;border:1px solid #d5d9e0;border-radius:2px"></div>
<div class="t" style="left:996px;top:540.700px;font-size:10px;color:#a8afb8">Eg. 9a-5p</div>
<div class="a" style="left:991px;top:552px;width:75px;height:13px;background:#eefcff"></div>
<div class="t" style="left:992.700px;top:558.500px;font-size:9.6px;color:#4f7bb0">General Manager</div>
<svg style="left:1081px;top:555.500px;color:#4b5563" width="10" height="6"><use href="#chev"/></svg>

<div class="c gr" style="left:471px;top:568.500px;box-shadow:-7px 0 0 #f0fdfa"><span>7 am - 10 am</span><span>Security</span></div>
<div class="c cn" style="left:888px;top:568.500px;box-shadow:-7px 0 0 #fdf4ff">Canceled</div>

<div class="c ye" style="left:575.500px;top:605.500px"><span>5 am - 11 am</span><span>General Manager</span></div>
<svg style="left:661px;top:609px" width="10" height="9"><use href="#sw"/></svg>

<div class="c pk" style="left:367px;top:643px"><span>5 am - 11 am</span><span>Bar Tender</span></div>
<div class="a" style="left:864px;top:644px;width:20px;height:11px;background:#fdf4ff"></div>
<div class="d" style="left:872.700px;top:646.300px;background:#85703f"></div>
<div class="c pu" style="left:888px;top:643px"><span>5 am - 11 am</span><span>Floor Stuff</span></div>
<div class="d" style="left:977px;top:646.300px;background:#7e8a4a"></div>

<div class="c pk" style="left:680px;top:680.500px;box-shadow:-8px 0 0 #fef6fc"><span>5 am - 11 am</span><span>Bar Tender</span></div>

<div class="c ca" style="left:471px;top:717.500px"><span>7 am - 2 pm</span><span>Cashier</span></div>
<div class="d" style="left:560px;top:721px;background:#a0653a"></div>
<div class="a" style="left:570px;top:720px;width:6px;height:8px;background:#fdf0fb"></div>
<div class="c gy" style="left:888px;top:717.500px">Temp Lay Off</div>

<div class="a" style="left:783.500px;top:755px;width:99px;height:32px;background:#fbedd9;border-radius:3px;box-shadow:0 1px 1px rgba(60,60,80,.1)"></div>
<div class="t" style="left:788px;top:771.300px;font-size:10px;color:#555b66">Add Shift</div>
<div class="a" style="left:834px;top:761px;width:20px;height:20.500px;background:#fff8ef;border-radius:3px"></div>
<div class="a" style="left:858px;top:761px;width:20.500px;height:20.500px;background:#fff8ef;border-radius:3px"></div>
<svg style="left:838px;top:765px" width="12" height="12"><path d="M6 0V12M0 6H12" stroke="#c49a3a" stroke-width="1.200"/></svg>
<svg style="left:862px;top:765px" width="13" height="13" viewBox="0 0 13 13"><rect x=".7" y=".7" width="11.600" height="11.600" rx="1" stroke="#b58a2e" stroke-width="1.200"/><path d="M4 9 9 4M5 4H9V8" stroke="#b58a2e" stroke-width="1.100"/></svg>

<div class="c pk" style="left:471px;top:792px;box-shadow:-7px 0 0 #fef6fc"><span>10 am - 11 am</span><span>Bar Tender</span></div>
<div class="d" style="left:560px;top:795.700px;background:#6f9a5a"></div>
<div class="c pu" style="left:575.500px;top:792px"><span>6 am - 12 am</span><span>Floor Stuff</span></div>
<div class="c gr" style="left:888px;top:792px;box-shadow:-7px 0 0 #f0fdfa,4px 0 0 #f0fdfa"><span>5 am - 11 am</span><span>Security</span></div>

<div class="c ye" style="left:784px;top:829.500px"><span>5 am - 7 am</span><span>Shift Leader</span></div>
<svg style="left:869.500px;top:833px" width="10" height="9"><use href="#sw"/></svg>

<div class="a" style="left:366.700px;top:867px;width:411.500px;height:32px;background:#e4e6ea;border-radius:3px"></div>
<div class="m" style="left:572px;top:882.700px;font-size:10px;color:#5a626e;letter-spacing:.15px">Before Start Date</div>

<div class="a" style="left:784px;top:904px;width:306.500px;height:34px;background:#fde0e0;border-radius:3px 3px 0 0"></div>
<div class="m" style="left:937.500px;top:920px;font-size:10px;color:#5a5f6b;letter-spacing:.15px">Leaving...</div>

<!-- red row -->
<div class="a" style="left:352px;top:940px;width:12px;height:36px;background:#fde4f7"></div>
<div class="a" style="left:364px;top:936.500px;width:739px;height:2.500px;background:#fbd5f3"></div>
<div class="a" style="left:1094px;top:939px;width:9px;height:37px;background:#fde4f7"></div>
<div class="a" style="left:364px;top:938.700px;width:730px;height:37px;background:#dc2626;border-top:5px solid #a63e24;border-left:4px solid #8b5a2b;border-right:5px solid #8b5a2b"></div>
<div class="m" style="left:731px;top:958px;font-size:10px;color:#ffe4e6;letter-spacing:.1px">There is no payrate setup for this section!</div>
<div class="k" style="top:951px"></div>
</body></html>
